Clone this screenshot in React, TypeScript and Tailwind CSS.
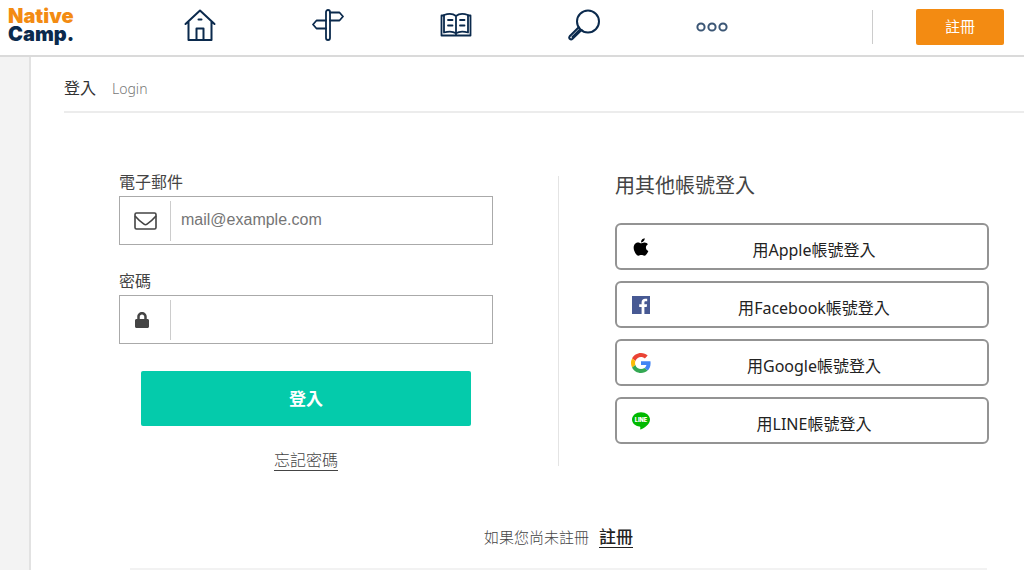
import React from 'react';
import { FaApple, FaLock } from 'react-icons/fa';

const HomeIcon = () => (
  <svg viewBox="0 0 32 32" className="w-8 h-8" fill="none" stroke="currentColor" strokeWidth="2" strokeLinejoin="round" strokeLinecap="round">
    <path d="M1.5 15 16 1.5 30.5 15M4.5 13v18h23V13" />
    <path d="M12.5 31V19.5h7V31M14.5 10.5h3" />
  </svg>
);

const SignIcon = () => (
  <svg viewBox="0 0 32 32" className="w-8 h-8" fill="none" stroke="currentColor" strokeWidth="1.8" strokeLinejoin="round" strokeLinecap="round">
    <rect x="14" y="1" width="4" height="30" rx="2" />
    <path d="M18 3.5h9.5l3.5 4-3.5 4H18M14 11.5H4.500L1 15.500l3.500 4H14" />
  </svg>
);

const BookIcon = () => (
  <svg viewBox="0 0 32 32" className="w-8 h-8" fill="none" stroke="currentColor" strokeWidth="1.8" strokeLinejoin="round" strokeLinecap="round">
    <path d="M4 6.500H1.500v20h29v-20H28" />
    <path d="M16 7C13 4.500 8 4.500 4 6v17.500c4-1.200 9-1.200 12 .8 3-2 8-2 12-.8V6c-4-1.500-9-1.500-12 1zM16 7v19" />
    <path d="M8 11h4.500M8 16.500h4.500M20 11h4.500M20 16.500h4.500" />
  </svg>
);

const SearchIcon = () => (
  <svg viewBox="0 0 32 32" className="w-8 h-8" fill="none" stroke="currentColor" strokeWidth="2" strokeLinejoin="round" strokeLinecap="round">
    <circle cx="20" cy="12.500" r="11" />
    <path d="M10.500 18.500 1.700 27.300a2 2 0 0 0 0 2.500 2 2 0 0 0 2.800 0L13.500 21M11.500 21 4.500 28" />
  </svg>
);

const MoreIcon = () => (
  <svg viewBox="0 0 32 32" className="w-8 h-8 text-[#3b5675]" fill="none" stroke="currentColor" strokeWidth="2">
    <circle cx="5" cy="18" r="3.600" />
    <circle cx="16" cy="18" r="3.600" />
    <circle cx="27" cy="18" r="3.600" />
  </svg>
);

const MailIcon = () => (
  <svg viewBox="0 0 24 20" className="w-6 h-5" fill="none" stroke="currentColor" strokeWidth="1.6" strokeLinejoin="round">
    <rect x="1" y="2" width="21" height="16" rx="1.500" />
    <path d="M1 5c3 3.500 6 6 9 8.200 1 .7 2 .7 3 0 3-2.200 6-4.700 9-8.200" />
  </svg>
);

const FacebookIcon = () => (
  <svg viewBox="0 0 18 18" className="w-[18px] h-[18px]">
    <rect width="18" height="18" fill="#475993" />
    <path fill="#fff" d="M12.400 18v-7h2.300l.4-2.700h-2.700V6.500c0-.8.300-1.300 1.400-1.300h1.400V2.800c-.3 0-1.100-.1-2.100-.1-2.100 0-3.500 1.300-3.500 3.500v2.100H7.200V11h2.400v7z" />
  </svg>
);

const GoogleIcon = () => (
  <svg viewBox="0 0 48 48" className="w-5 h-5">
    <path fill="#EA4335" d="M24 9.500c3.540 0 6.710 1.220 9.210 3.600l6.850-6.850C35.900 2.380 30.470 0 24 0 14.620 0 6.510 5.380 2.560 13.220l7.980 6.190C12.430 13.720 17.740 9.500 24 9.500z" />
    <path fill="#4285F4" d="M46.980 24.550c0-1.570-.15-3.090-.38-4.550H24v9.020h12.940c-.58 2.960-2.260 5.480-4.780 7.180l7.730 6c4.510-4.180 7.090-10.360 7.090-17.650z" />
    <path fill="#FBBC05" d="M10.530 28.590A14.500 14.500 0 0 1 9.770 24c0-1.600.27-3.140.76-4.590l-7.980-6.190A23.900 23.900 0 0 0 0 24c0 3.880.92 7.540 2.560 10.780l7.970-6.190z" />
    <path fill="#34A853" d="M24 48c6.480 0 11.930-2.130 15.890-5.810l-7.730-6c-2.150 1.450-4.920 2.300-8.160 2.300-6.260 0-11.570-4.220-13.470-9.910l-7.980 6.190C6.510 42.620 14.620 48 24 48z" />
  </svg>
);

const LineIcon = () => (
  <svg viewBox="0 0 18 18" className="w-[18px] h-[18px]">
    <path fill="#00b900" d="M9 .3C4.100.3 0 3.500 0 7.500c0 3.600 3.200 6.600 7.500 7.100.9.200.9.600.7 2.100-.1.700.3 1 1 .6C12 16 18 12.500 18 7.500 18 3.500 13.900.3 9 .3z" />
    <text x="9" y="9.500" fill="#fff" fontSize="5.500" fontWeight="900" textAnchor="middle" fontFamily="Inter, sans-serif">LINE</text>
  </svg>
);

const navItems = [
  { label: 'Home', icon: <HomeIcon /> },
  { label: 'Guide', icon: <SignIcon /> },
  { label: 'Textbooks', icon: <BookIcon /> },
  { label: 'Search', icon: <SearchIcon /> },
  { label: 'More', icon: <MoreIcon /> },
];

const providers = [
  { name: 'Apple', icon: <FaApple className="w-5 h-5 text-black" /> },
  { name: 'Facebook', icon: <FacebookIcon /> },
  { name: 'Google', icon: <GoogleIcon /> },
  { name: 'LINE', icon: <LineIcon /> },
];

interface FieldProps {
  id: string;
  label: string;
  type: string;
  placeholder?: string;
  icon: React.ReactNode;
}

const Field: React.FC<FieldProps> = ({ id, label, type, placeholder, icon }) => (
  <div>
    <label htmlFor={id} className="block text-base leading-6 pb-0.5">{label}</label>
    <div className="flex items-center h-[49px] border border-[#aaa]">
      <span className="w-[51px] h-10 shrink-0 flex items-center pl-3.5 border-r border-[#ccc]">{icon}</span>
      <input
        id={id}
        type={type}
        placeholder={placeholder}
        className="flex-1 min-w-0 h-full px-2.5 pb-0.5 font-['Liberation_Sans',sans-serif] text-base outline-none placeholder:text-[#757575]"
      />
    </div>
  </div>
);

const App: React.FC = () => {
  return (
    <div lang="zh-Hant" className="min-h-screen flex flex-col bg-white text-[#444] font-['Noto_Sans','Noto_Sans_CJK_TC',sans-serif]">
      <header className="flex items-center h-[57px] pb-0.5 border-b-2 border-[#dadada]">
        <a href="#" className="w-[136px] shrink-0 pl-2 pb-1 font-['Inter',sans-serif] text-xl leading-[18px] font-black text-[#0b2a4d]">
          <span className="text-[#f38b12]">Native</span>
          <br />
          Camp.
        </a>
        <nav className="w-5/8 pb-1 grid grid-cols-5 text-[#0b2a4d]">
          {navItems.map((item) => (
            <a key={item.label} href="#" aria-label={item.label} className="flex justify-center">
              {item.icon}
            </a>
          ))}
        </nav>
        <div className="ml-auto pr-5 flex items-center gap-[43px]">
          <span className="w-px h-[34px] bg-[#ccc]" />
          <button className="w-[88px] h-9 rounded-xs bg-[#f38b12] text-white text-[15px]">註冊</button>
        </div>
      </header>

      <div className="flex flex-1">
        <div className="w-[31px] shrink-0 bg-[#f3f3f3] border-r-2 border-[#e2e2e2]" />
        <main className="flex-1 min-w-0">
          <div className="ml-[33px] h-14 pb-[5px] pt-3 flex items-center gap-4 border-b-2 border-[#ececec]">
            <h1 className="text-base text-[#333]">登入</h1>
            <span className="text-sm leading-6 pt-0.5 font-light text-[#777]">Login</span>
          </div>

          <div className="flex pl-[88px] pr-[35px] pt-[57px]">
            <form className="flex-1 min-w-0 flex flex-col" onSubmit={(e) => e.preventDefault()}>
              <div className="flex flex-col gap-6">
                <Field id="email" label="電子郵件" type="email" placeholder="mail@example.com" icon={<MailIcon />} />
                <Field id="password" label="密碼" type="password" icon={<FaLock className="w-4 h-4" />} />
              </div>
              <button className="mx-[22px] mt-[27px] h-[55px] rounded-xs bg-[#04cbab] text-white text-[17px] font-bold">登入</button>
              <a href="#" className="self-center mt-[22px] text-base font-light underline underline-offset-4">忘記密碼</a>
            </form>

            <div className="ml-[65px] mr-14 my-1.5 w-px h-[290px] bg-[#e4e4e4]" />

            <section className="flex-1 min-w-0">
              <h2 className="text-xl leading-7 pt-0.5 pb-[23px]">用其他帳號登入</h2>
              <div className="flex flex-col gap-[11px]">
                {providers.map((p) => (
                  <button key={p.name} className="flex items-center h-[47px] pl-3.5 pr-2.5 border-2 border-[#939393] rounded-md text-base text-[#222]">
                    <span className="w-5 flex justify-center">{p.icon}</span>
                    <span className="flex-1 pt-1.5">用{p.name}帳號登入</span>
                  </button>
                ))}
              </div>
            </section>
          </div>

          <div className="ml-[99px] mr-[37px] mt-[52px] pb-[18px] flex items-center justify-center gap-2.5 border-b-2 border-[#f2f2f2]">
            <span className="text-[15px] font-light">如果您尚未註冊</span>
            <a href="#" className="text-[17px] font-medium text-[#222] underline underline-offset-4">註冊</a>
          </div>
        </main>
      </div>
    </div>
  );
};

export default App;
